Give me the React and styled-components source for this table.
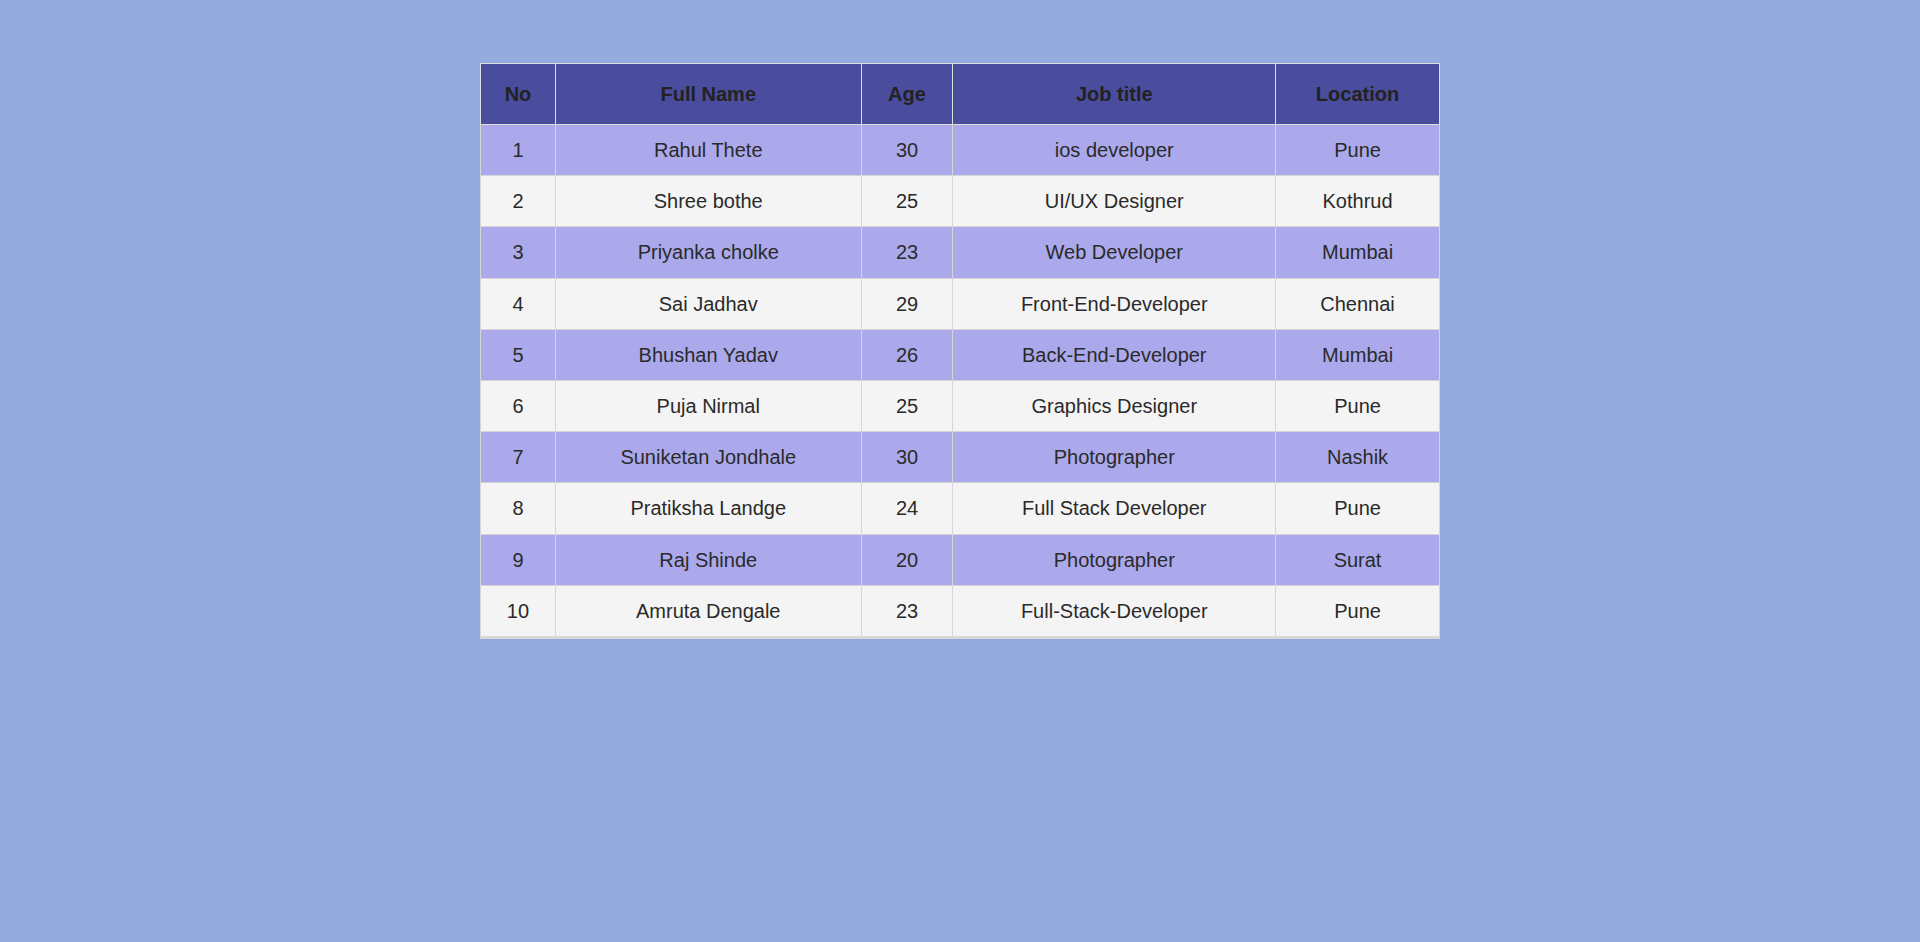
import React from "react";
import styled, { createGlobalStyle } from "styled-components";

const Global = createGlobalStyle`
  html, body {
    margin: 0;
    padding: 0;
    background: #94acdd;
    font-family: "Liberation Sans", Arial, sans-serif;
  }
  body { min-height: 942px; }
`;

const Page = styled.div`
  display: flex;
  justify-content: center;
  padding-top: 63px;
`;

const Table = styled.table`
  width: 960px;
  border-collapse: collapse;
  font-size: 20px;
  color: #2a2a2a;
  border-bottom: 3px solid #d8d8d8;
`;

const HeadCell = styled.th`
  background: #4a4c9d;
  color: #222;
  font-weight: bold;
  padding: 19px 15px 18px;
  border: 1px solid #dcdcdc;
  text-align: center;
  line-height: 23px;
`;

const Row = styled.tr`
  background: ${(p) => (p.$odd ? "#aba9eb" : "#f4f4f4")};
`;

const Cell = styled.td`
  padding: 14px 15px;
  border: 1px solid #d6d6d6;
  text-align: center;
  line-height: 22.2px;
`;

const cols = [75, 306, 92, 323, 164];
const headers = ["No", "Full Name", "Age", "Job title", "Location"];
const data = [
  [1, "Rahul Thete", 30, "ios developer", "Pune"],
  [2, "Shree bothe", 25, "UI/UX Designer", "Kothrud"],
  [3, "Priyanka cholke", 23, "Web Developer", "Mumbai"],
  [4, "Sai Jadhav", 29, "Front-End-Developer", "Chennai"],
  [5, "Bhushan Yadav", 26, "Back-End-Developer", "Mumbai"],
  [6, "Puja Nirmal", 25, "Graphics Designer", "Pune"],
  [7, "Suniketan Jondhale", 30, "Photographer", "Nashik"],
  [8, "Pratiksha Landge", 24, "Full Stack Developer", "Pune"],
  [9, "Raj Shinde", 20, "Photographer", "Surat"],
  [10, "Amruta Dengale", 23, "Full-Stack-Developer", "Pune"],
];

export default function App() {
  return (
    <>
      <Global />
      <Page>
        <Table>
          <colgroup>
            {cols.map((w, i) => (
              <col key={i} style={{ width: w }} />
            ))}
          </colgroup>
          <thead>
            <tr>
              {headers.map((h) => (
                <HeadCell key={h}>{h}</HeadCell>
              ))}
            </tr>
          </thead>
          <tbody>
            {data.map((r, i) => (
              <Row key={i} $odd={i % 2 === 0}>
                {r.map((c, j) => (
                  <Cell key={j}>{c}</Cell>
                ))}
              </Row>
            ))}
          </tbody>
        </Table>
      </Page>
    </>
  );
}
